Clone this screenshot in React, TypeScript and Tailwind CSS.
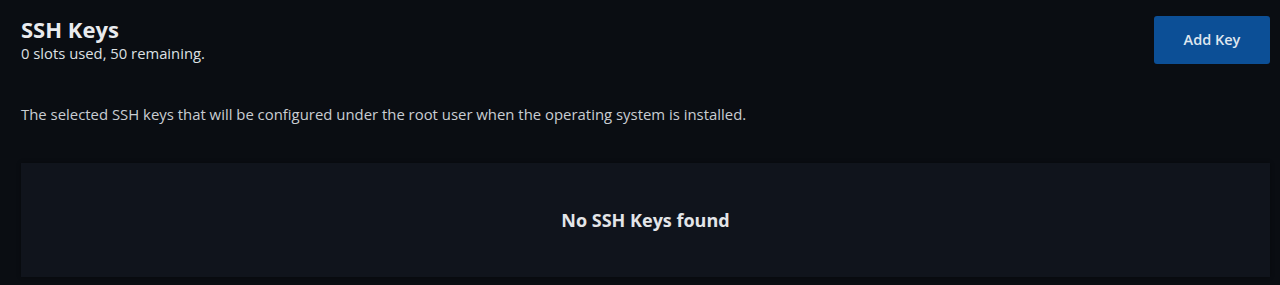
export default function App() {
  return (
    <div
      className="min-h-[285px] w-full bg-[#0a0d12] pl-[21px] pr-[10px] pt-[15px] text-[#e6e8eb]"
      style={{ fontFamily: '"Open Sans", "Noto Sans", sans-serif' }}
    >
      {/* Header */}
      <div className="flex items-start justify-between">
        <div>
          <h1 className="text-[22px] font-bold leading-[28px] text-[#e9ebee]">SSH Keys</h1>
          <p className="text-[14.8px] leading-[20px] text-[#dde0e4]">0 slots used, 50 remaining.</p>
        </div>
        <button className="mt-[1px] h-[48px] w-[116px] rounded-[3px] bg-[#0c4f96] text-[14.5px] font-semibold text-[#dfe6ef]">
          Add Key
        </button>
      </div>

      <p className="mt-[40px] text-[14.9px] leading-[20px] text-[#c9cdd2]">
        The selected SSH keys that will be configured under the root user when the operating system is installed.
      </p>

      {/* Empty state */}
      <div className="mt-[39px] flex h-[114px] items-center justify-center bg-[#10141c] shadow-[0_0_4px_rgba(0,0,0,0.35)]">
        <span className="text-[18px] font-bold text-[#e3e5e8]">No SSH Keys found</span>
      </div>
    </div>
  );
}
